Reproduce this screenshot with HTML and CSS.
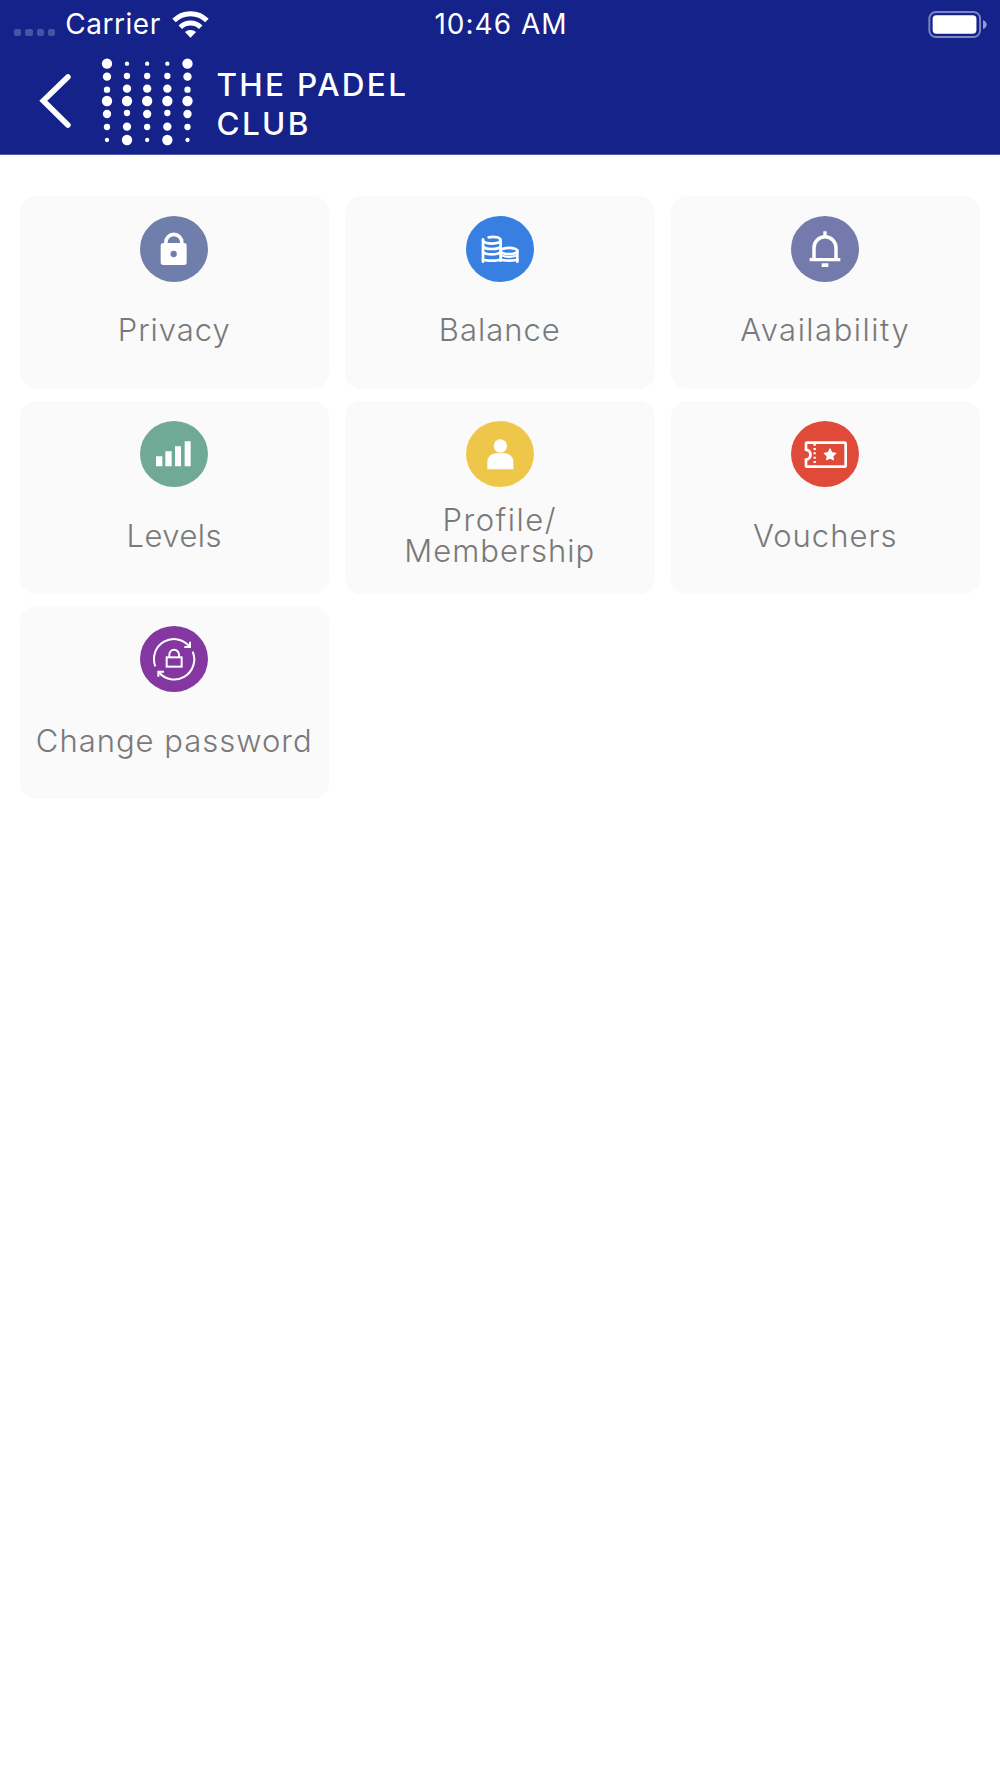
FILE: index.html
```html
<!DOCTYPE html>
<html lang="en">
<head>
    <meta charset="UTF-8">
    <meta name="viewport" content="width=device-width, initial-scale=1.0">
    <title>The Padel Club</title>
    <link rel="stylesheet" href="styles.css">
</head>
<body>
    <header class="header">
        <div class="status-bar">
            <div class="carrier">
                <div class="signal"><span></span><span></span><span></span><span></span></div>
                <span class="carrier-name">Carrier</span>
                <svg class="wifi" viewBox="0 0 110 82">
                    <g fill="none" stroke="#fff" stroke-width="15">
                        <path d="M5 29 A71 71 0 0 1 105 29"/>
                        <path d="M24 49 A44 44 0 0 1 86 49"/>
                    </g>
                    <path d="M55 81 L38 64 A25 25 0 0 1 72 64 Z" fill="#fff"/>
                </svg>
            </div>
            <div class="time">10:46 AM</div>
            <svg class="battery" viewBox="0 0 180 82">
                <rect x="3" y="3" width="154" height="76" rx="20" fill="none" stroke="#fff" stroke-width="6" opacity="0.45"/>
                <rect x="13" y="13" width="133" height="56" rx="11" fill="#fff"/>
                <path d="M166 27 Q177 32 177 41 Q177 50 166 55 Z" fill="#fff" opacity="0.55"/>
            </svg>
        </div>
        <div class="nav-bar">
            <svg class="back" viewBox="118 218 100 168">
                <path d="M205.500 229 L131 301.500 L205.500 375" fill="none" stroke="#fff" stroke-width="17" stroke-linecap="round"/>
            </svg>
            <svg class="logo" viewBox="300 170 285 270">
                <defs>
                    <g id="side-dots">
                        <circle cy="190" r="15.500"/><circle cy="229" r="12.500"/><circle cy="268" r="9.500"/>
                        <circle cy="302" r="15.500"/><circle cy="341" r="12.500"/><circle cy="380" r="9.500"/><circle cy="419" r="6.500"/>
                    </g>
                    <g id="inner-dots">
                        <circle cy="190" r="6.500"/><circle cy="227" r="9.500"/><circle cy="265" r="12.500"/>
                        <circle cy="302" r="15.500"/><circle cy="338" r="9.500"/><circle cy="379" r="12.500"/><circle cy="419" r="15.500"/>
                    </g>
                </defs>
                <g fill="#fff">
                    <use href="#side-dots" x="321"/>
                    <use href="#inner-dots" x="381"/>
                    <g transform="translate(441.500 0)">
                        <circle cy="190" r="6.500"/><circle cy="227" r="9.500"/><circle cy="265" r="12.500"/>
                        <circle cy="302" r="15.500"/><circle cy="341" r="12.500"/><circle cy="380" r="9.500"/><circle cy="419" r="6.500"/>
                    </g>
                    <use href="#inner-dots" x="502"/>
                    <use href="#side-dots" x="562.500"/>
                </g>
            </svg>
            <h1>THE PADEL<br>CLUB</h1>
        </div>
    </header>

    <main class="menu">
        <div class="card">
            <svg class="icon" viewBox="0 0 204 198">
                <ellipse cx="102" cy="99" rx="102" ry="99" fill="#6f7eaa"/>
                <path d="M77.500 85V79a24 24 0 0 1 48 0v6" fill="none" stroke="#fff" stroke-width="11"/>
                <rect x="62" y="81" width="78" height="66" rx="8" fill="#fff"/>
                <circle cx="101" cy="114" r="9.500" fill="#6f7eaa"/>
            </svg>
            <p class="label">Privacy</p>
        </div>
        <div class="card">
            <svg class="icon" viewBox="0 0 204 198">
                <ellipse cx="102" cy="99" rx="102" ry="99" fill="#3780e1"/>
                <g fill="none" stroke="#fff" stroke-width="8" stroke-linecap="round">
                    <path d="M51 70V137M104 73V134M154 104V137"/>
                    <path d="M68 64C86 60 104 65 104 73C104 86 51 86 51 73"/>
                    <path d="M51 90C55 102 100 102 104 90M51 106C55 118 100 118 104 106M51 130C58 135 97 135 104 130"/>
                    <ellipse cx="129" cy="105" rx="25" ry="9.500"/>
                    <path d="M104 130C112 135 148 135 154 130"/>
                </g>
                <path d="M108 119C118 124 140 124 150 119" fill="none" stroke="#fff" stroke-width="6"/>
            </svg>
            <p class="label">Balance</p>
        </div>
        <div class="card">
            <svg class="icon" viewBox="0 0 204 198">
                <ellipse cx="102" cy="99" rx="102" ry="99" fill="#757aad"/>
                <path d="M69 130V95a33 33 0 0 1 66 0v35" fill="none" stroke="#fff" stroke-width="10.500"/>
                <path d="M97 46h10v14h-10zM56 126h92v10h-92zM92 142h20v11h-20z" fill="#fff"/>
            </svg>
            <p class="label wide">Availability</p>
        </div>
        <div class="card">
            <svg class="icon" viewBox="0 0 204 198">
                <ellipse cx="102" cy="99" rx="102" ry="99" fill="#70a996"/>
                <path d="M48 106h19v30h-19zM76 91h19v45h-19zM105 76h18v60h-18zM134 61h18v75h-18z" fill="#fff"/>
            </svg>
            <p class="label tight">Levels</p>
        </div>
        <div class="card">
            <svg class="icon" viewBox="0 0 204 198">
                <ellipse cx="102" cy="99" rx="102" ry="99" fill="#eec74a"/>
                <circle cx="103" cy="75" r="20" fill="#fff"/>
                <path d="M64 145V123a26 26 0 0 1 26-26h26a26 26 0 0 1 26 26v22z" fill="#fff"/>
            </svg>
            <p class="label"><span class="wide">Profile/</span><span>Membership</span></p>
        </div>
        <div class="card">
            <svg class="icon" viewBox="0 0 204 198">
                <ellipse cx="102" cy="99" rx="102" ry="99" fill="#e04a39"/>
                <path d="M49 65H161Q164 65 164 68V134Q164 137 161 137H49Q45 137 45 134V116C63 112 63 90 45 86V68Q45 65 49 65Z" fill="none" stroke="#fff" stroke-width="8"/>
                <path d="M71 68V136" fill="none" stroke="#fff" stroke-width="7" stroke-dasharray="6 7"/>
                <path d="M117 84L122 95L134 97L125 105L127 116L117 111L107 116L109 105L100 97L112 95Z" fill="#fff" stroke="#fff" stroke-width="4" stroke-linejoin="round"/>
            </svg>
            <p class="label">Vouchers</p>
        </div>
        <div class="card">
            <svg class="icon" viewBox="0 0 204 198">
                <ellipse cx="102" cy="99" rx="102" ry="99" fill="#8437a0"/>
                <g fill="none" stroke="#fff" stroke-width="6">
                    <path d="M46 121A60 60 0 0 1 149 62"/>
                    <path d="M158 77A60 60 0 0 1 56 138"/>
                    <path d="M150 47v16h-17M55 152v-15h17"/>
                    <rect x="80" y="94" width="45" height="28"/>
                    <path d="M88 94V86a14.500 14.500 0 0 1 29 0v8"/>
                </g>
            </svg>
            <p class="label">Change password</p>
        </div>
    </main>
</body>
</html>
```
FILE: styles.css
```css
* {
    margin: 0;
    padding: 0;
    box-sizing: border-box;
}

body {
    background-color: #ffffff;
    font-family: 'Inter', sans-serif;
}

.header {
    height: 155px;
    background-color: #14228a;
    border-bottom: 1px solid #4d59a8;
    color: #ffffff;
}

.status-bar {
    display: grid;
    grid-template-columns: 1fr auto 1fr;
    align-items: center;
    height: 47px;
    padding: 1px 12px 0 14px;
    font-size: 28px;
    line-height: 46px;
}

.carrier {
    display: flex;
    align-items: center;
}

.signal {
    display: flex;
    gap: 4px;
    margin-top: 17px;
}

.signal span {
    width: 7.3px;
    height: 7.3px;
    border-radius: 2px;
    background-color: #4853a2;
}

.carrier-name {
    margin-left: 10px;
    letter-spacing: 0.55px;
}

.time {
    letter-spacing: 1px;
}

.wifi {
    width: 37px;
    height: 27px;
    margin-left: 11px;
}

.battery {
    width: 60px;
    height: 27px;
    justify-self: end;
}

.nav-bar {
    display: flex;
    align-items: flex-start;
    padding-left: 39px;
}

.back {
    width: 33px;
    height: 56px;
    margin-top: 26px;
}

.logo {
    width: 95px;
    height: 90px;
    margin: 9.7px 0 0 28px;
}

h1 {
    margin: 19px 0 0 21.5px;
    font-size: 31.5px;
    font-weight: 500;
    line-height: 38.5px;
    letter-spacing: 2.3px;
}

.menu {
    display: grid;
    grid-template-columns: repeat(3, 309.5px);
    grid-auto-rows: 193px;
    gap: 12.2px 16px;
    padding: 41px 19.5px;
}

.card {
    display: flex;
    flex-direction: column;
    align-items: center;
    padding-top: 19.7px;
    background-color: #fafafa;
    border-radius: 16px;
}

.icon {
    width: 68px;
    height: 66px;
}

.label {
    display: flex;
    flex-direction: column;
    align-items: center;
    justify-content: center;
    height: 62px;
    margin-top: 17.3px;
    color: #797979;
    font-size: 31px;
    font-weight: 350;
    line-height: 31px;
    letter-spacing: 1px;
    white-space: nowrap;
}

.wide {
    letter-spacing: 1.5px;
}

.tight {
    letter-spacing: 0.5px;
}
```
